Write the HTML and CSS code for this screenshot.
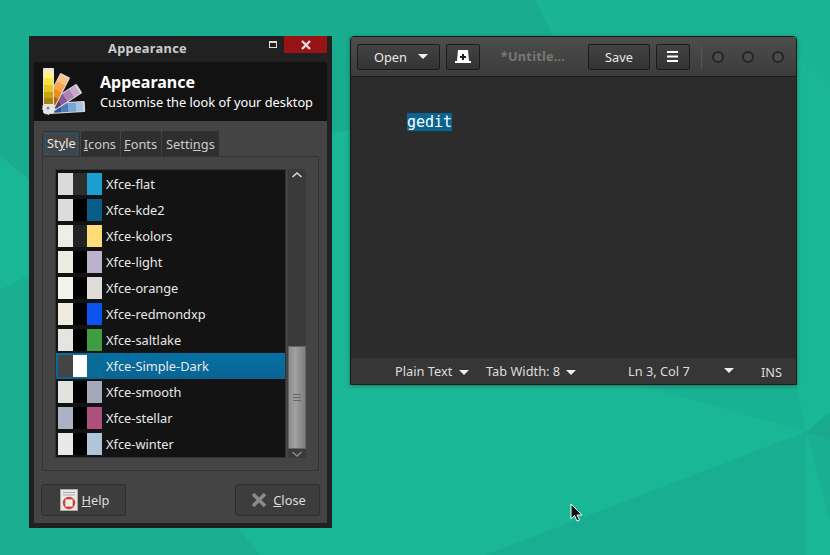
FILE: index.html
```html
<!doctype html>
<html lang="en">
  <head>
    <title>Appearance and gedit</title>
    <link rel="stylesheet" href="styles.css">
  </head>
  <body>
    <svg class="wallpaper" viewBox="0 0 830 555">
      <polygon points="0,0 830,0 830,555 0,555" fill="#1ab797" />
      <polygon points="0,0 535,0 553,36 350,130 29,180 0,155" fill="#19ac8e" />
      <polygon points="535,0 830,0 830,90 800,60 553,36" fill="#1ab394" />
      <polygon points="0,290 29,275 260,555 0,555" fill="#19ae90" />
      <polygon points="806,432 485,555 805,555" fill="#18ae91" />
      <polygon points="640,385 797,385 806,432" fill="#19b194" />
      <polygon points="806,432 830,412 830,440" fill="#19a98d" />
      <polygon points="806,432 830,440 830,520" fill="#19af92" />
    </svg>

    <section class="window appearance">
      <header class="titlebar">
        <span class="title">Appearance</span>
        <span class="maximize"></span>
        <span class="closer">
          <svg width="10" height="10" viewBox="0 0 10 10"><path d="M1 1l8 8M9 1l-8 8" stroke="#ddd" stroke-width="2.4" /></svg>
        </span>
      </header>
      <div class="banner">
        <svg class="palette" width="46" height="48" viewBox="0 0 46 48">
          <g transform="rotate(87 6 40)">
            <rect x="1" y="3" width="11" height="41" rx="1" fill="#d8d8d8" />
            <rect x="2" y="5" width="9" height="7" fill="#a3c4e6" />
            <rect x="2" y="12" width="9" height="8" fill="#7ba5d6" />
            <rect x="2" y="20" width="9" height="7" fill="#4f7ab8" />
            <rect x="2" y="27" width="9" height="7" fill="#2c5798" />
          </g>
          <g transform="rotate(57 6 40)">
            <rect x="1" y="3" width="11" height="41" rx="1" fill="#d8d8d8" />
            <rect x="2" y="5" width="9" height="7" fill="#c9a6cc" />
            <rect x="2" y="12" width="9" height="8" fill="#ad84b4" />
            <rect x="2" y="20" width="9" height="7" fill="#875a94" />
            <rect x="2" y="27" width="9" height="7" fill="#5f3b70" />
          </g>
          <g transform="rotate(27 6 40)">
            <rect x="1" y="3" width="11" height="41" rx="1" fill="#d8d8d8" />
            <rect x="2" y="5" width="9" height="7" fill="#fcc27a" />
            <rect x="2" y="12" width="9" height="8" fill="#fba64a" />
            <rect x="2" y="20" width="9" height="7" fill="#f58a12" />
            <rect x="2" y="27" width="9" height="7" fill="#b85f08" />
          </g>
          <rect x="1" y="0" width="11" height="45" rx="1" fill="#e4e4e4" />
          <rect x="2" y="3" width="9" height="7" fill="#fff08a" />
          <rect x="2" y="10" width="9" height="7" fill="#fbe33f" />
          <rect x="2" y="17" width="9" height="7" fill="#e8c820" />
          <rect x="2" y="24" width="9" height="6" fill="#c8a410" />
          <rect x="2" y="30" width="9" height="6" fill="#a8860c" />
          <circle cx="6" cy="40" r="1.5" fill="#888" />
        </svg>
        <div>
          <div class="banner-title">Appearance</div>
          <div class="banner-sub">Customise the look of your desktop</div>
        </div>
      </div>
      <div class="content">
        <div class="tabs">
          <span class="tab current"><span class="tab-label">St<u>y</u>le</span></span>
          <span class="tab"><u>I</u>cons</span>
          <span class="tab"><u>F</u>onts</span>
          <span class="tab last">Setti<u>n</u>gs</span>
        </div>
        <div class="frame">
          <ul class="themes">
            <li class="theme"><i class="sw" style="background:#d9dadc"></i><i class="sw" style="background:#2e2e2e"></i><i class="sw" style="background:#1a9fd0"></i>Xfce-flat</li>
            <li class="theme"><i class="sw" style="background:#dcdcdc"></i><i class="sw" style="background:#000"></i><i class="sw" style="background:#0a5d8a"></i>Xfce-kde2</li>
            <li class="theme"><i class="sw" style="background:#eeeee6"></i><i class="sw" style="background:#222"></i><i class="sw" style="background:#ffdc78"></i>Xfce-kolors</li>
            <li class="theme"><i class="sw" style="background:#ecede0"></i><i class="sw" style="background:#000"></i><i class="sw" style="background:#bab2cd"></i>Xfce-light</li>
            <li class="theme"><i class="sw" style="background:#f3f2ed"></i><i class="sw" style="background:#000"></i><i class="sw" style="background:#e0ddd8"></i>Xfce-orange</li>
            <li class="theme"><i class="sw" style="background:#efebdf"></i><i class="sw" style="background:#000"></i><i class="sw" style="background:#0a55ef"></i>Xfce-redmondxp</li>
            <li class="theme"><i class="sw" style="background:#e4e5e0"></i><i class="sw" style="background:#000"></i><i class="sw" style="background:#3f9c43"></i>Xfce-saltlake</li>
            <li class="theme selected"><i class="sw" style="background:#444"></i><i class="sw" style="background:#fff"></i><i class="sw" style="background:#0a6a98"></i>Xfce-Simple-Dark</li>
            <li class="theme"><i class="sw" style="background:#e2e3de"></i><i class="sw" style="background:#000"></i><i class="sw" style="background:#a3a8ba"></i>Xfce-smooth</li>
            <li class="theme"><i class="sw" style="background:#adb1c4"></i><i class="sw" style="background:#000"></i><i class="sw" style="background:#ae4f7d"></i>Xfce-stellar</li>
            <li class="theme"><i class="sw" style="background:#e8e8e6"></i><i class="sw" style="background:#000"></i><i class="sw" style="background:#afc5da"></i>Xfce-winter</li>
          </ul>
          <div class="scrollbar">
            <svg class="arrow" width="12" height="8" viewBox="0 0 12 8"><path d="M1.500 6L6 2l4.500 4" fill="none" stroke="#ddd" stroke-width="1.500" /></svg>
            <div class="slider"><span class="grip"></span></div>
            <svg class="arrow" width="12" height="8" viewBox="0 0 12 8"><path d="M1.500 2L6 6l4.500-4" fill="none" stroke="#888" stroke-width="1.500" /></svg>
          </div>
        </div>
        <div class="actions">
          <button class="btn">
            <svg width="18" height="22" viewBox="0 0 18 22">
              <rect x="0.500" y="0.500" width="17" height="21" fill="#e8e8e4" stroke="#aaa" />
              <path d="M3 3.500h12M3 6h12" stroke="#aaa" />
              <circle cx="9" cy="14" r="5" fill="none" stroke="#d0403a" stroke-width="2.400" />
              <path d="M5.500 10.500l2 2M12.500 10.500l-2 2M5.500 17.500l2-2M12.500 17.500l-2-2" stroke="#fff" stroke-width="1.500" />
            </svg>
            <span><u>H</u>elp</span>
          </button>
          <button class="btn">
            <svg class="x-icon" width="16" height="16" viewBox="0 0 16 16"><path d="M2 2l12 12M14 2L2 14" stroke="#8a8a8a" stroke-width="3.600" /></svg>
            <span><u>C</u>lose</span>
          </button>
        </div>
      </div>
    </section>

    <section class="window gedit">
      <header class="toolbar">
        <button class="tool open">Open <i class="caret"></i></button>
        <button class="tool icon-btn">
          <svg width="16" height="13" viewBox="0 0 16 13"><path d="M3 0h10l1 11h2v2H0v-2h2z" fill="#fff" /><path d="M8 4v6M5 7h6" stroke="#222" stroke-width="2" /></svg>
        </button>
        <span class="doc-title">*Untitle...</span>
        <button class="tool save">Save</button>
        <button class="tool icon-btn">
          <svg width="12" height="11" viewBox="0 0 12 11"><path d="M0 1h11M0 5.500h11M0 10h11" stroke="#fff" stroke-width="2" /></svg>
        </button>
        <span class="divider"></span>
        <span class="dots"><i class="dot"></i><i class="dot"></i><i class="dot"></i></span>
      </header>
      <div class="editor"><span class="sel">gedit</span></div>
      <footer class="status">
        <span class="stat s-lang">Plain Text <i class="caret"></i></span>
        <span class="stat s-tab">Tab Width: 8 <i class="caret"></i></span>
        <span class="stat s-pos">Ln 3, Col 7</span>
        <i class="caret s-caret"></i>
        <span class="stat s-ins">INS</span>
      </footer>
    </section>

    <svg class="pointer" width="13" height="20" viewBox="0 0 13 20">
      <path d="M1 1v15l3.500-3.500 2.500 5.500 2.500-1-2.500-5h5z" fill="#111" stroke="#fff" />
    </svg>
  </body>
</html>
```

FILE: styles.css
```css
* {
  box-sizing: border-box;
}
html,
body {
  margin: 0;
  width: 830px;
  height: 555px;
  overflow: hidden;
}
body {
  position: relative;
  font: 12.8px "Noto Sans", sans-serif;
  color: #e8e8e8;
}
.wallpaper {
  position: absolute;
  left: 0;
  top: 0;
  width: 830px;
  height: 555px;
}
.window {
  position: absolute;
  display: flex;
  flex-direction: column;
}
.pointer {
  position: absolute;
  left: 570px;
  top: 503px;
}
button {
  font: inherit;
  color: inherit;
}

/* appearance dialog */
.appearance {
  left: 29px;
  top: 36px;
  width: 303px;
  height: 492px;
  background: #212121;
  padding: 0 5px 5px;
}
.titlebar {
  height: 26px;
  flex: none;
  display: flex;
  align-items: center;
  position: relative;
  padding-bottom: 2px;
}
.title {
  width: 100%;
  text-align: center;
  padding-right: 66px;
  font-weight: 700;
  color: #ccc;
  letter-spacing: 0.3px;
}
.maximize {
  position: absolute;
  right: 50px;
  top: 5px;
  width: 8px;
  height: 7px;
  border: 1px solid #ddd;
  border-top-width: 2px;
}
.closer {
  position: absolute;
  right: 0;
  top: 0;
  width: 43px;
  height: 17px;
  background: #981313;
  display: flex;
  align-items: center;
  justify-content: center;
}
.banner {
  height: 59px;
  flex: none;
  background: #121212;
  display: flex;
  align-items: center;
  gap: 12px;
  padding: 0 0 2px 8px;
  color: #fff;
}
.palette {
  flex: none;
  margin-top: 2px;
}
.banner-title {
  font-size: 16px;
  font-weight: 700;
  line-height: 22px;
}
.banner-sub {
  line-height: 18px;
}
.content {
  flex: 1;
  background: #444;
  padding: 10px 8px 7px;
  display: flex;
  flex-direction: column;
}
.tabs {
  display: flex;
  height: 25px;
  flex: none;
  gap: 1px;
}
.tab {
  background: #2f2f2f;
  padding: 4px 4px 0 3px;
  line-height: 18px;
  color: #ccc;
  border-radius: 2px 2px 0 0;
}
.tab.last {
  padding-left: 4px;
}
.tab.current {
  background: #444;
  border: 1px solid #333;
  border-bottom: 0;
  padding: 2px 1px 2px 2px;
}
.tab-label {
  display: block;
  border: 1px solid #155a7a;
  padding: 0 1px;
  line-height: 19px;
  color: #e8e8e8;
  margin-top: -1px;
}
.frame {
  height: 315px;
  flex: none;
  border: 1px solid #333;
  border-radius: 2px;
  padding: 12px;
  display: flex;
  gap: 2px;
}
.themes {
  list-style: none;
  margin: 0;
  padding: 1px 0 0;
  width: 231px;
  height: 289px;
  flex: none;
  background: #131313;
  border: 1px solid #333;
}
.theme {
  height: 26px;
  display: flex;
  align-items: center;
  padding-left: 2px;
  color: #e8e8e8;
}
.theme.selected {
  background: linear-gradient(#0670a4, #0a6492);
}
.sw {
  width: 15px;
  height: 22px;
  flex: none;
}
.sw + .sw {
  width: 14px;
}
.sw:nth-child(3) {
  width: 15px;
  margin-right: 4px;
}
.scrollbar {
  width: 18px;
  height: 289px;
  flex: none;
  background: #3a3a3a;
  border-radius: 2px;
  display: flex;
  flex-direction: column;
  align-items: center;
  padding-top: 1px;
}
.arrow {
  flex: none;
  margin-top: 1px;
}
.slider {
  margin-top: auto;
  width: 18px;
  height: 103px;
  flex: none;
  background: linear-gradient(90deg, #8e8e8e, #a0a0a0 40%, #7e7e7e);
  border: 1px solid #666;
  display: flex;
  align-items: center;
  justify-content: center;
}
.grip {
  width: 8px;
  height: 7px;
  border-top: 1px solid #666;
  border-bottom: 1px solid #666;
  background: linear-gradient(#666, #666) center / 100% 1px no-repeat;
}
.actions {
  display: flex;
  justify-content: space-between;
  margin: auto 0 0 -1px;
  width: 279px;
}
.btn {
  width: 85px;
  height: 32px;
  background: #3d3d3d;
  border: 1px solid #2e2e2e;
  border-radius: 3px;
  display: flex;
  align-items: center;
  justify-content: center;
  gap: 4px;
  padding: 0 0 0 2px;
  color: #ddd;
}
.x-icon {
  margin-right: 2px;
}

/* gedit */
.gedit {
  left: 350px;
  top: 36px;
  width: 447px;
  height: 349px;
  background: #2c2c2c;
  border: 1px solid #141414;
  border-radius: 4px 4px 0 0;
  box-shadow: 0 1px 4px rgba(0, 0, 0, 0.3);
}
.toolbar {
  height: 40px;
  flex: none;
  background: linear-gradient(#4c4e4c, #3a3b3a);
  border-bottom: 1px solid #1e1e1e;
  display: flex;
  align-items: center;
  padding-left: 6px;
  gap: 6px;
}
.tool {
  height: 26px;
  background: linear-gradient(#424342, #333);
  border: 1px solid #1c1c1c;
  border-radius: 2px;
  color: #e8e8e8;
  padding: 0;
  display: flex;
  align-items: center;
  justify-content: center;
}
.open {
  width: 83px;
  justify-content: flex-start;
  padding-left: 16px;
  gap: 11px;
}
.icon-btn {
  width: 34px;
}
.save {
  width: 62px;
}
.doc-title {
  width: 96px;
  padding: 0 2px 2px 0;
  font-weight: 700;
  color: #777;
  text-align: center;
  letter-spacing: 0.2px;
}
.caret {
  display: inline-block;
  width: 0;
  height: 0;
  border: 5px solid transparent;
  border-top: 5px solid #eee;
  border-bottom: 0;
}
.stat .caret {
  margin-left: 3px;
  position: relative;
  top: -1px;
}
.divider {
  width: 1px;
  height: 24px;
  background: #555;
  margin-left: 5px;
}
.dots {
  display: flex;
  gap: 18px;
  margin-left: 4px;
}
.dot {
  width: 12px;
  height: 12px;
  border: 2px solid #252525;
  border-radius: 50%;
  background: #4a4a4a;
}
.editor {
  flex: 1;
  padding: 36px 0 0 56px;
  font: 15px/18px "DejaVu Sans Mono", monospace;
  color: #fff;
}
.sel {
  background: #0a6492;
}
.status {
  height: 26px;
  flex: none;
  background: #363636;
  display: flex;
  align-items: center;
  color: #ddd;
  position: relative;
}
.stat {
  position: absolute;
  top: 4px;
  white-space: nowrap;
}
.s-lang {
  left: 44px;
}
.s-tab {
  left: 135px;
}
.s-pos {
  left: 277px;
}
.s-caret {
  position: absolute;
  left: 373px;
  top: 10px;
}
.s-ins {
  left: 410px;
  top: 5px;
}
```
